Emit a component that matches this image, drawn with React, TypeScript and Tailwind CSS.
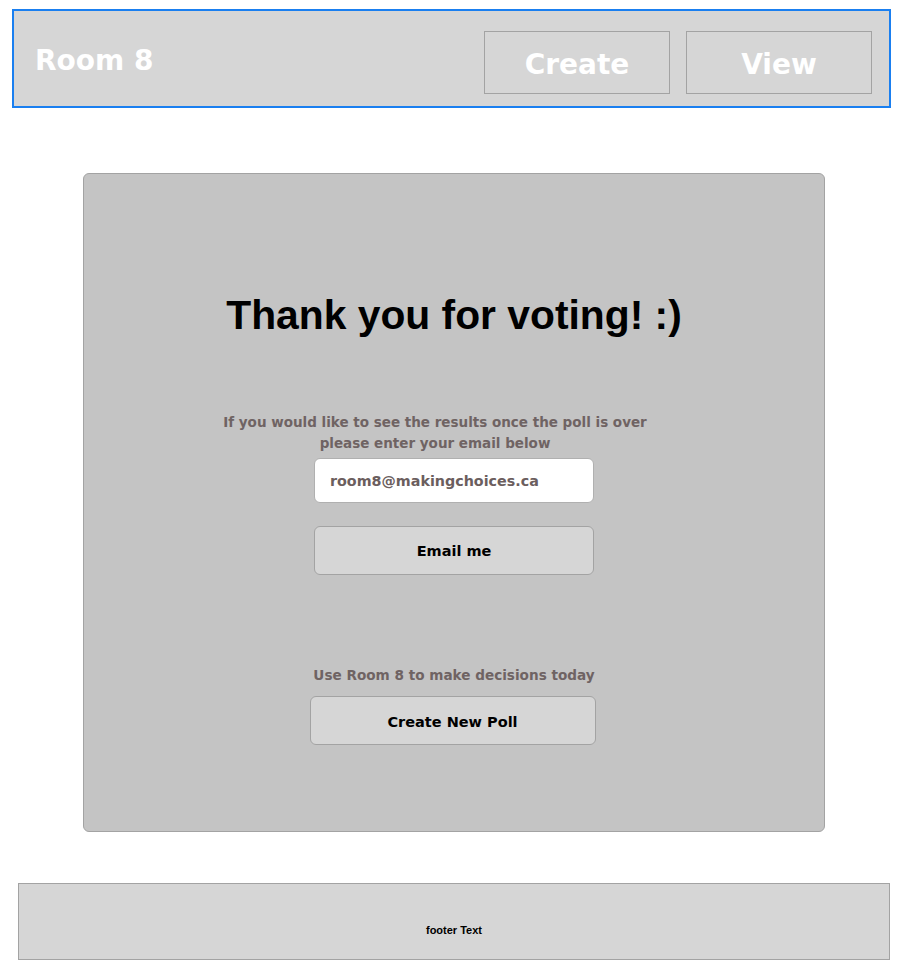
import React from "react";

const App = () => {
  return (
    <div className="w-[904px] h-[972px] bg-white font-['Liberation_Sans',Arial,sans-serif]">
      {/* Header */}
      <header className="mt-[9px] ml-[12px] w-[879px] h-[99px] border-2 border-[#1a7ff0] bg-[#d6d6d6] flex items-center pl-[21px] pr-[17px] font-['DejaVu_Sans',sans-serif]">
        <div className="text-white text-[28px] font-bold leading-none mt-[5px]">Room 8</div>
        <nav className="ml-auto flex gap-[16px] mt-[8px]">
          <div className="w-[186px] h-[63px] border border-[#a3a3a3] flex items-center justify-center pt-[4px] text-white text-[28px] font-bold">
            Create
          </div>
          <div className="w-[186px] h-[63px] border border-[#a3a3a3] flex items-center justify-center pt-[4px] text-white text-[28px] font-bold">
            View
          </div>
        </nav>
      </header>

      {/* Card */}
      <main className="mt-[65px] ml-[83px] w-[742px] h-[659px] bg-[#c4c4c4] border border-[#a3a3a3] rounded-[6px] flex flex-col items-center">
        <h1 className="mt-[121px] text-[40.8px] font-bold text-black leading-none">
          Thank you for voting! :)
        </h1>
        <div className="flex flex-col items-center font-['DejaVu_Sans',sans-serif]">
          <p className="mt-[76px] -ml-[38px] text-[13.5px] font-bold text-[#6f6363] text-center leading-[21px] w-[440px]">
            If you would like to see the results once the poll is over please enter your email below
          </p>
          <div className="mt-[4px] w-[280px] h-[45px] bg-white border border-[#b0b0b0] rounded-[6px] flex items-center pl-[15px] pt-[2px] text-[14.3px] font-bold text-[#6b5e5e]">
            room8@makingchoices.ca
          </div>
          <button className="mt-[23px] w-[280px] h-[49px] bg-[#d6d6d6] border border-[#a3a3a3] rounded-[6px] flex items-center justify-center pt-[4px] text-[14.5px] font-bold text-black">
            Email me
          </button>
          <p className="mt-[94px] text-[13.6px] font-bold text-[#6f6363] leading-none">
            Use Room 8 to make decisions today
          </p>
          <button className="mt-[14px] -ml-[3px] w-[286px] h-[49px] bg-[#d6d6d6] border border-[#a3a3a3] rounded-[6px] flex items-center justify-center pt-[3px] text-[14.5px] font-bold text-black">
            Create New Poll
          </button>
        </div>
      </main>

      {/* Footer */}
      <footer className="mt-[51px] ml-[18px] w-[872px] h-[77px] bg-[#d6d6d6] border border-[#a3a3a3] flex items-end justify-center pb-[21px]">
        <span className="text-[11px] font-bold text-black font-['Liberation_Sans_Narrow','Liberation_Sans',sans-serif]">
          footer Text
        </span>
      </footer>
    </div>
  );
};

export default App;
